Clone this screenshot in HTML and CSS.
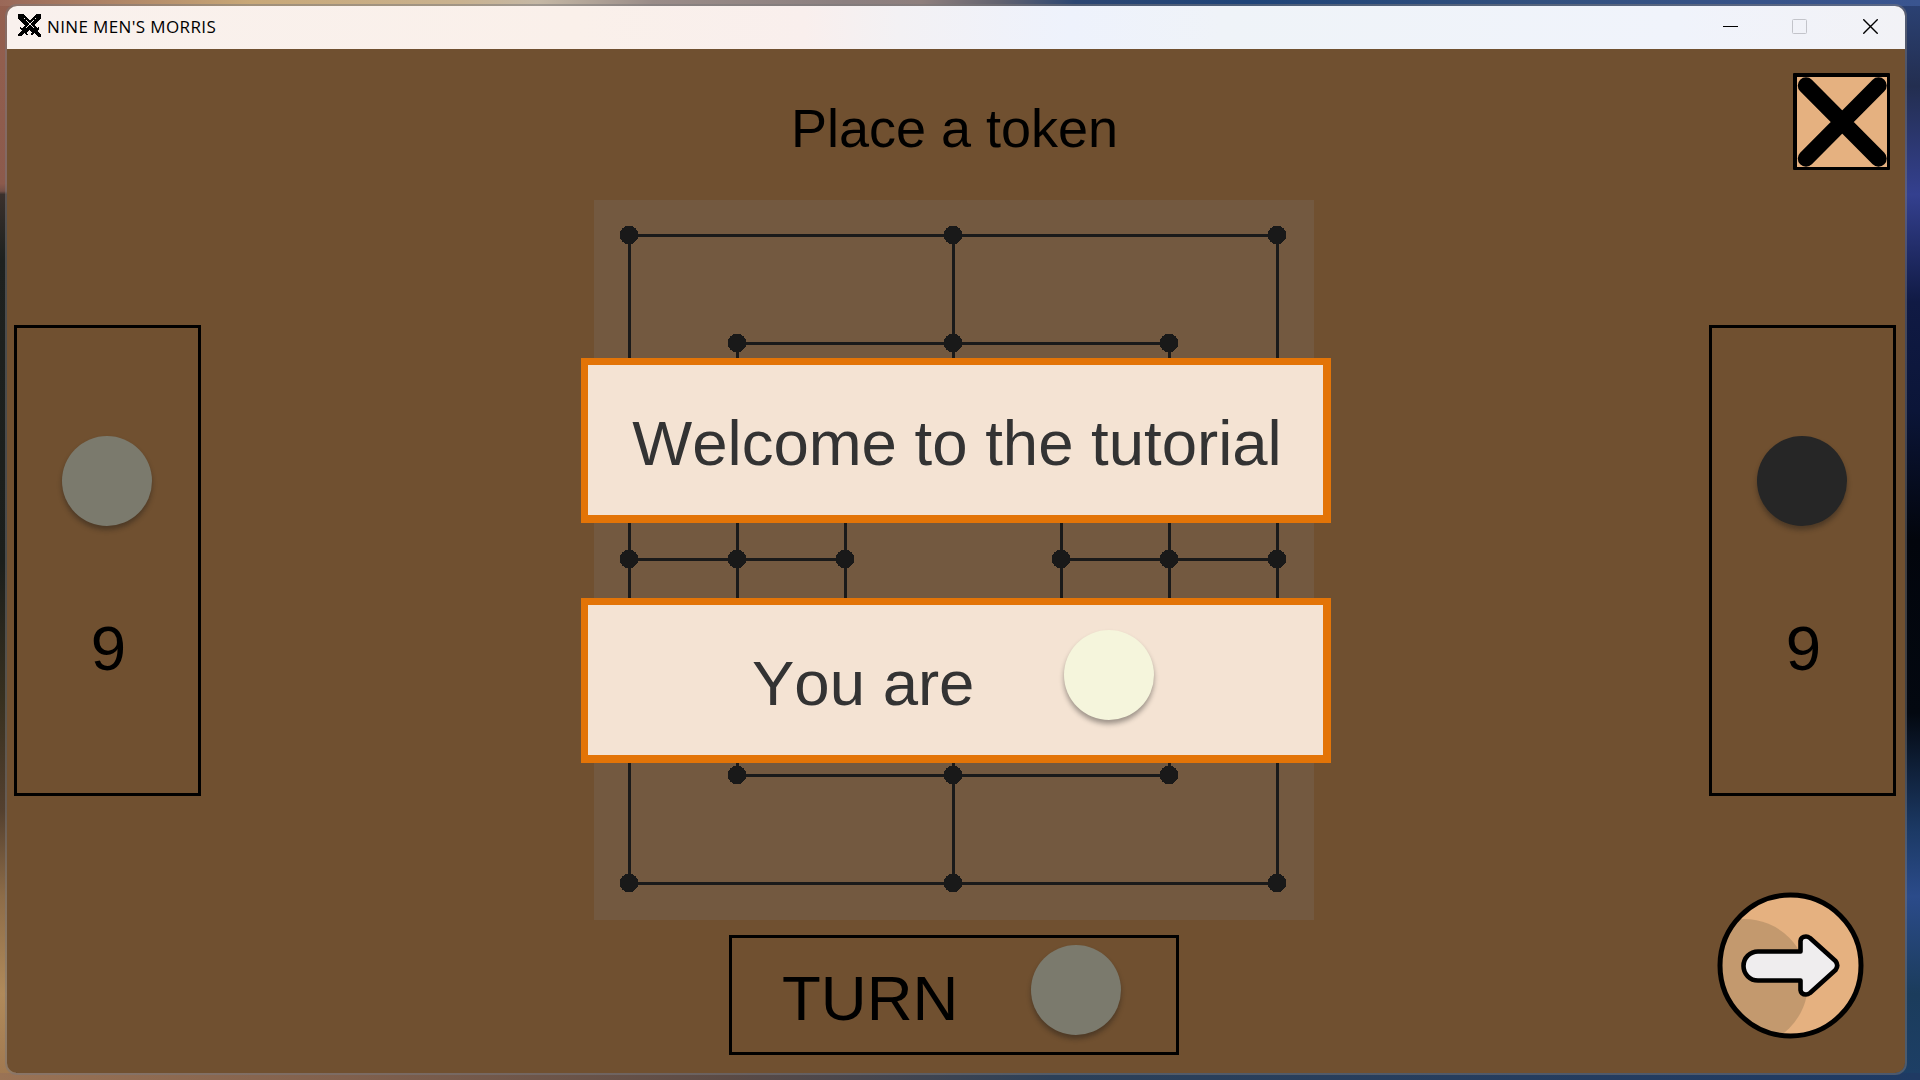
FILE: index.html
```html
<!DOCTYPE html>
<html lang="en">
<head>
<meta charset="utf-8">
<title>Nine Men's Morris</title>
<link rel="stylesheet" href="styles.css">
</head>
<body class="desktop">
<main class="window">
  <header class="titlebar">
    <svg class="app-icon" width="24" height="24" viewBox="0 0 24 24" shape-rendering="crispEdges">
      <path d="M0 0H5L17 12L19 14L21 13V15L19 17L23 21V23H20L17 19L14 21H13L14 18L0 5Z"/>
      <path d="M23 0H18L6 12L4 14L2 13V15L4 17L0 20V22H3L6 19L9 21H10L9 18L23 5Z"/>
      <path d="M6 4L16 14M18 4L8 14" stroke="#f9f1ed" stroke-width="1" stroke-dasharray="2 1" fill="none"/>
    </svg>
    <h1 class="app-name">NINE MEN'S MORRIS</h1>
    <div class="controls">
      <svg width="15" height="15" viewBox="0 0 15 15"><path d="M0 7.5H15" stroke="#000"/></svg>
      <svg width="15" height="15" viewBox="0 0 15 15"><rect x=".5" y=".5" width="14" height="14" rx="1" fill="none" stroke="#c3c4ca"/></svg>
      <svg width="15" height="15" viewBox="0 0 15 15"><path d="M.3 .3L14.7 14.7M14.7 .3L.3 14.7" stroke="#000" stroke-width="1.4"/></svg>
    </div>
  </header>
  <section class="game">
    <aside class="side side-left">
      <div class="tray"><span class="token token-dim"></span><span class="count">9</span></div>
    </aside>
    <div class="center">
      <h2 class="status">Place a token</h2>
      <div class="board">
        <svg class="grid" width="720" height="720" viewBox="0 0 720 720">
          <path class="lines" d="M35.5 35.5H683.5V683.5H35.5ZM143.5 143.5H575.5V575.5H143.5ZM251.5 251.5H467.5V467.5H251.5ZM359.5 35.5V251.5M359.5 467.5V683.5M35.5 359.5H251.5M467.5 359.5H683.5"/>
          <g class="points">
            <circle cx="35" cy="35" r="9.2"/><circle cx="359" cy="35" r="9.2"/><circle cx="683" cy="35" r="9.2"/>
            <circle cx="143" cy="143" r="9.2"/><circle cx="359" cy="143" r="9.2"/><circle cx="575" cy="143" r="9.2"/>
            <circle cx="35" cy="359" r="9.2"/><circle cx="143" cy="359" r="9.2"/><circle cx="251" cy="359" r="9.2"/>
            <circle cx="467" cy="359" r="9.2"/><circle cx="575" cy="359" r="9.2"/><circle cx="683" cy="359" r="9.2"/>
            <circle cx="143" cy="575" r="9.2"/><circle cx="359" cy="575" r="9.2"/><circle cx="575" cy="575" r="9.2"/>
            <circle cx="35" cy="683" r="9.2"/><circle cx="359" cy="683" r="9.2"/><circle cx="683" cy="683" r="9.2"/>
          </g>
        </svg>
        <div class="messages">
          <p class="message message-welcome">Welcome to the tutorial</p>
          <p class="message message-player"><span>You are</span><span class="token token-light"></span></p>
        </div>
      </div>
      <div class="turn"><span class="turn-label">TURN</span><span class="token token-dim"></span></div>
    </div>
    <aside class="side side-right">
      <svg class="close" width="97" height="97" viewBox="0 0 97 97">
        <rect width="97" height="97" rx="1"/>
        <rect x="4" y="4" width="90" height="90" fill="#e5b180"/>
        <path d="M13 12.5L85.5 85.5M85.5 12.5L13 85.5" stroke="#000" stroke-width="16.5" stroke-linecap="round"/>
      </svg>
      <div class="tray"><span class="token token-dark"></span><span class="count">9</span></div>
      <svg class="next" width="147" height="147" viewBox="0 0 147 147">
        <defs><clipPath id="disc"><circle cx="73.500" cy="73.500" r="70"/></clipPath></defs>
        <circle cx="73.500" cy="73.500" r="70" fill="#e5b180"/>
        <circle cx="27" cy="91" r="64" fill="#c3996e" clip-path="url(#disc)"/>
        <circle cx="73.500" cy="73.500" r="70.500" fill="none" stroke="#000" stroke-width="5"/>
        <path d="M41 59.500H83.500V49Q84 44.500 89 44.500Q91 44.500 93 46L118.500 69Q122 73.500 118.500 78L93 101Q91 102.500 89 102.500Q84 102.500 83.500 98V88.500H41A14.500 14.500 0 0 1 41 59.500Z" fill="#efedee" stroke="#000" stroke-width="4.600" stroke-linejoin="round"/>
      </svg>
    </aside>
  </section>
</main>
</body>
</html>
```

FILE: styles.css
```css
* { box-sizing: border-box; margin: 0; }

.desktop {
  width: 1920px;
  height: 1080px;
  overflow: hidden;
  padding: 4px 13px 5px 5px;
  font-family: "Liberation Sans", Arial, sans-serif;
  font-kerning: none;
  color: #000;
  background:
    linear-gradient(90deg, #9a6858, #c8a878 13%, #c9b290 24%, #c5b8a5 28%, #9a8c88 34%, #8c8080 44%, #8e7f7d 48%, #63636f 52%, #2c4672 56%, #1f4478 65%, #33507e 80%, #3a5590) 0 0 / 100% 6px no-repeat,
    linear-gradient(90deg, #9a7355, #80604d 18%, #5a4a45 38%, #2c4058 55%, #1f3a63) 0 100% / 100% 7px no-repeat,
    linear-gradient(#94604f, #8c5a4c 17%, #745047 17.700%, #3a302c 18%, #1e211f 24%, #1b1e1b 52%, #38301f 65%, #54402f 75%, #8d6c48 83%, #b08a5a 92%, #a07850) 0 0 / 16px 100% no-repeat,
    linear-gradient(#2b4275, #232e50 8%, #34408f 18%, #101a44 28%, #0b1538 38%, #02050c 50%, #030810 66%, #1c3a66 77%, #2b4b8a 83%, #1b3c5c 92%, #1d3f66) 100% 0 / 24px 100% no-repeat,
    #232e45;
}

.window {
  width: 1902px;
  height: 1071px;
  border: 2px solid rgba(122, 120, 122, .5);
  border-radius: 12px;
  background: #705030;
  background-clip: padding-box;
  overflow: hidden;
}

.titlebar {
  display: flex;
  align-items: center;
  height: 43px;
  padding: 0 27px 0 11px;
  background: linear-gradient(90deg, #f9f1ed, #faf0ea 30%, #f9efed 42%, #f3f1f4 47%, #eef2fc 56%, #eff3f8 64%, #f0f3fb 88%, #f2f2f6);
}

.app-icon { margin-top: -3px; }

.app-name {
  margin: -3px 0 0 5px;
  font: 400 17px "Open Sans", "Noto Sans", sans-serif;
  letter-spacing: .37px;
}

.controls {
  display: flex;
  gap: 54px;
  margin: -2px 0 0 auto;
}

.controls svg:last-child { margin-left: 2px; }

.game {
  display: grid;
  grid-template-columns: 187px 1506px 187px;
  gap: 1px;
  height: 1024px;
  padding-left: 7px;
}

.side { display: flex; flex-direction: column; }
.side-left { padding-top: 276px; }
.side-right { padding-top: 24px; }

.tray {
  display: flex;
  flex-direction: column;
  align-items: center;
  height: 471px;
  padding: 108px 1px 0 0;
  border: 3px solid #000;
}

.count {
  margin: 86px 0 0 3px;
  font-size: 63.500px;
  line-height: 72px;
}

.close { align-self: flex-end; margin: 0 6px 155px 0; }
.next { margin: 96px 0 0 8px; }

.token {
  flex: none;
  width: 90px;
  height: 90px;
  border-radius: 50%;
  box-shadow: 0 4px 5px rgba(20, 20, 20, .38);
}

.token-dim { background: #7b7a6d; }
.token-dark { background: #262626; }
.token-light { background: #f5f5dc; }

.center {
  display: flex;
  flex-direction: column;
  align-items: center;
  padding-right: 2px;
}

.status {
  height: 151px;
  padding: 48px 0 0 1px;
  font-size: 54px;
  font-weight: 400;
  line-height: 62px;
}

.board {
  position: relative;
  width: 720px;
  height: 720px;
  background: #735940;
}

.grid { display: block; }
.lines { fill: none; stroke: #1a1a1a; stroke-width: 3; }
.points { fill: #191919; shape-rendering: crispEdges; }

.messages {
  position: absolute;
  top: 158px;
  left: -13px;
  display: grid;
  gap: 75px;
}

.message {
  display: flex;
  justify-content: center;
  align-items: center;
  width: 750px;
  height: 165px;
  padding-top: 5px;
  border: solid #e37407;
  border-width: 7px 8px 8px 7px;
  background: #f4e3d3;
  color: #333;
  font-size: 63.500px;
  line-height: 72px;
}

.message-welcome { padding-left: 3px; }

.message-player {
  justify-content: flex-start;
  gap: 90px;
  padding-left: 164px;
}

.message-player .token { margin-top: -15px; }

.turn {
  display: flex;
  align-items: center;
  gap: 73px;
  width: 450px;
  height: 120px;
  margin-top: 15px;
  padding-left: 50px;
  border: 3px solid #000;
  font-size: 63.500px;
}

.turn-label { padding-top: 5px; }
.turn .token { margin-top: -10px; }
```
